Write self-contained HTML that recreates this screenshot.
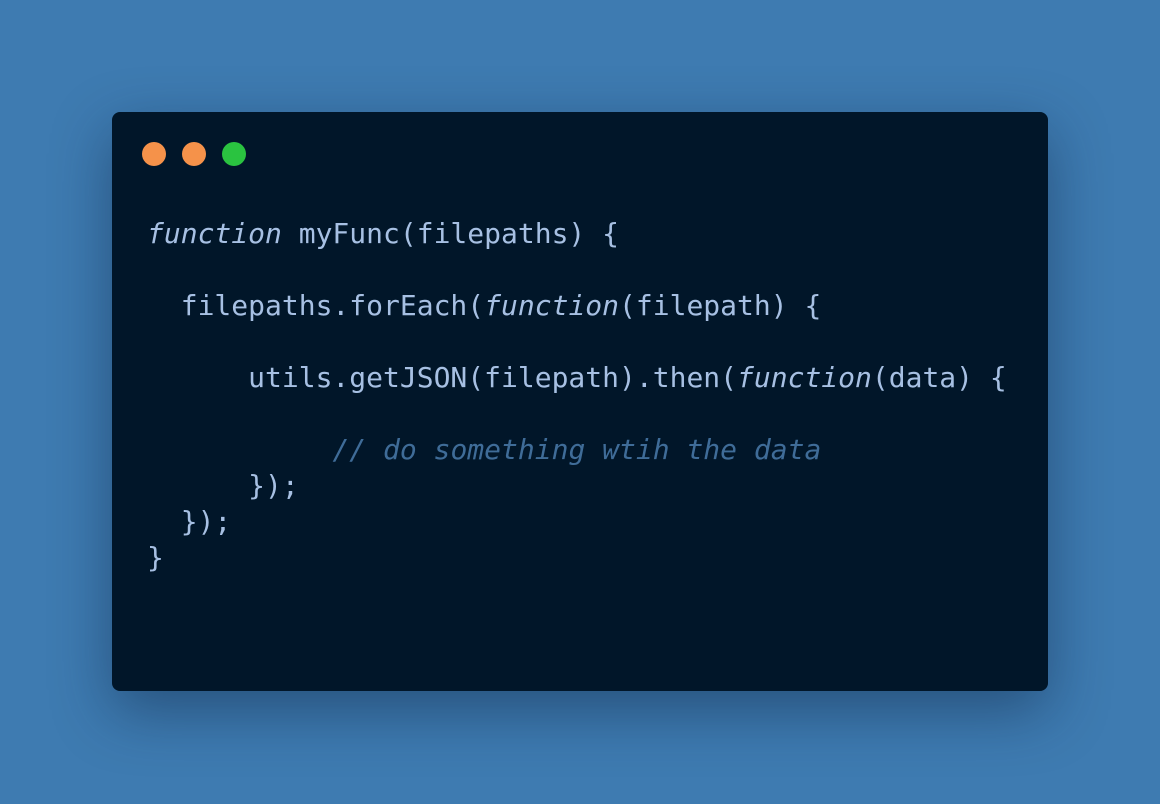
<!DOCTYPE html>
<html><head><meta charset="utf-8"><style>
html,body{margin:0;padding:0;width:1160px;height:804px;overflow:hidden;background:#3e7bb1;}
.win{position:absolute;left:112px;top:112px;width:936px;height:579px;background:#011629;border-radius:8px;box-shadow:0 20px 60px rgba(10,30,60,0.45);}
.dot{position:absolute;top:30px;width:24px;height:24px;border-radius:50%;}
pre{position:absolute;left:35px;top:104px;margin:0;font-family:"DejaVu Sans Mono","Liberation Mono",monospace;font-size:28px;line-height:36px;color:#a7c0e3;}
i{font-style:italic;}
.c{color:#3f6c98;font-style:italic;}
</style></head><body>
<div class="win">
<div class="dot" style="left:30px;background:#f5924a"></div>
<div class="dot" style="left:70px;background:#f5924a"></div>
<div class="dot" style="left:110px;background:#2ac340"></div>
<pre><i>function</i> myFunc(filepaths) {

  filepaths.forEach(<i>function</i>(filepath) {

      utils.getJSON(filepath).then(<i>function</i>(data) {

           <span class="c">// do something wtih the data</span>
      });
  });
}</pre>
</div>
</body></html>
